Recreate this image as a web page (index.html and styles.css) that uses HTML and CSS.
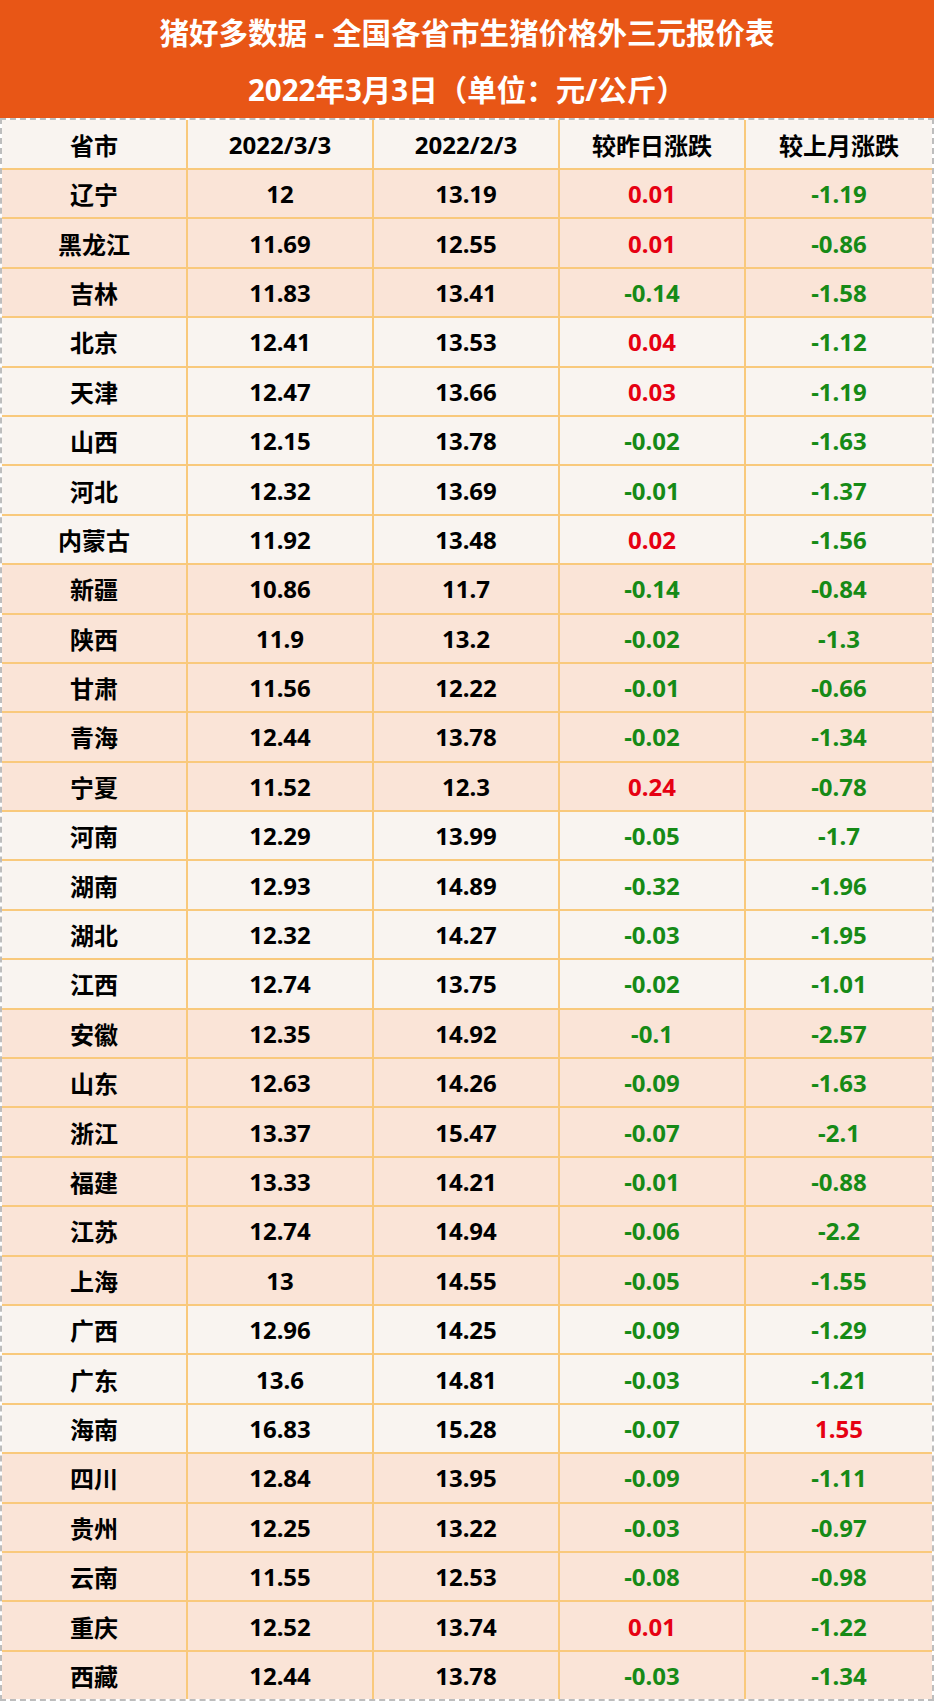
FILE: index.html
```html
<!DOCTYPE html>
<html lang="zh">
<head>
<meta charset="utf-8">
<title>猪好多数据 - 全国各省市生猪价格外三元报价表</title>
<link rel="stylesheet" href="styles.css">
</head>
<body>
<div class="page">
  <header class="banner">
    <div class="title">猪好多数据 - 全国各省市生猪价格外三元报价表</div>
    <div class="title">2022年3月3日（单位：元/公斤）</div>
  </header>
  <div class="sheet">
    <div class="row head"><div class="c">省市</div><div class="c">2022/3/3</div><div class="c">2022/2/3</div><div class="c">较昨日涨跌</div><div class="c">较上月涨跌</div></div>
    <div class="row pink"><div class="c">辽宁</div><div class="c">12</div><div class="c">13.19</div><div class="c up">0.01</div><div class="c dn">-1.19</div></div>
    <div class="row pink"><div class="c">黑龙江</div><div class="c">11.69</div><div class="c">12.55</div><div class="c up">0.01</div><div class="c dn">-0.86</div></div>
    <div class="row pink"><div class="c">吉林</div><div class="c">11.83</div><div class="c">13.41</div><div class="c dn">-0.14</div><div class="c dn">-1.58</div></div>
    <div class="row light"><div class="c">北京</div><div class="c">12.41</div><div class="c">13.53</div><div class="c up">0.04</div><div class="c dn">-1.12</div></div>
    <div class="row light"><div class="c">天津</div><div class="c">12.47</div><div class="c">13.66</div><div class="c up">0.03</div><div class="c dn">-1.19</div></div>
    <div class="row light"><div class="c">山西</div><div class="c">12.15</div><div class="c">13.78</div><div class="c dn">-0.02</div><div class="c dn">-1.63</div></div>
    <div class="row light"><div class="c">河北</div><div class="c">12.32</div><div class="c">13.69</div><div class="c dn">-0.01</div><div class="c dn">-1.37</div></div>
    <div class="row light"><div class="c">内蒙古</div><div class="c">11.92</div><div class="c">13.48</div><div class="c up">0.02</div><div class="c dn">-1.56</div></div>
    <div class="row pink"><div class="c">新疆</div><div class="c">10.86</div><div class="c">11.7</div><div class="c dn">-0.14</div><div class="c dn">-0.84</div></div>
    <div class="row pink"><div class="c">陕西</div><div class="c">11.9</div><div class="c">13.2</div><div class="c dn">-0.02</div><div class="c dn">-1.3</div></div>
    <div class="row pink"><div class="c">甘肃</div><div class="c">11.56</div><div class="c">12.22</div><div class="c dn">-0.01</div><div class="c dn">-0.66</div></div>
    <div class="row pink"><div class="c">青海</div><div class="c">12.44</div><div class="c">13.78</div><div class="c dn">-0.02</div><div class="c dn">-1.34</div></div>
    <div class="row pink"><div class="c">宁夏</div><div class="c">11.52</div><div class="c">12.3</div><div class="c up">0.24</div><div class="c dn">-0.78</div></div>
    <div class="row light"><div class="c">河南</div><div class="c">12.29</div><div class="c">13.99</div><div class="c dn">-0.05</div><div class="c dn">-1.7</div></div>
    <div class="row light"><div class="c">湖南</div><div class="c">12.93</div><div class="c">14.89</div><div class="c dn">-0.32</div><div class="c dn">-1.96</div></div>
    <div class="row light"><div class="c">湖北</div><div class="c">12.32</div><div class="c">14.27</div><div class="c dn">-0.03</div><div class="c dn">-1.95</div></div>
    <div class="row light"><div class="c">江西</div><div class="c">12.74</div><div class="c">13.75</div><div class="c dn">-0.02</div><div class="c dn">-1.01</div></div>
    <div class="row pink"><div class="c">安徽</div><div class="c">12.35</div><div class="c">14.92</div><div class="c dn">-0.1</div><div class="c dn">-2.57</div></div>
    <div class="row pink"><div class="c">山东</div><div class="c">12.63</div><div class="c">14.26</div><div class="c dn">-0.09</div><div class="c dn">-1.63</div></div>
    <div class="row pink"><div class="c">浙江</div><div class="c">13.37</div><div class="c">15.47</div><div class="c dn">-0.07</div><div class="c dn">-2.1</div></div>
    <div class="row pink"><div class="c">福建</div><div class="c">13.33</div><div class="c">14.21</div><div class="c dn">-0.01</div><div class="c dn">-0.88</div></div>
    <div class="row pink"><div class="c">江苏</div><div class="c">12.74</div><div class="c">14.94</div><div class="c dn">-0.06</div><div class="c dn">-2.2</div></div>
    <div class="row pink"><div class="c">上海</div><div class="c">13</div><div class="c">14.55</div><div class="c dn">-0.05</div><div class="c dn">-1.55</div></div>
    <div class="row light"><div class="c">广西</div><div class="c">12.96</div><div class="c">14.25</div><div class="c dn">-0.09</div><div class="c dn">-1.29</div></div>
    <div class="row light"><div class="c">广东</div><div class="c">13.6</div><div class="c">14.81</div><div class="c dn">-0.03</div><div class="c dn">-1.21</div></div>
    <div class="row light"><div class="c">海南</div><div class="c">16.83</div><div class="c">15.28</div><div class="c dn">-0.07</div><div class="c up">1.55</div></div>
    <div class="row pink"><div class="c">四川</div><div class="c">12.84</div><div class="c">13.95</div><div class="c dn">-0.09</div><div class="c dn">-1.11</div></div>
    <div class="row pink"><div class="c">贵州</div><div class="c">12.25</div><div class="c">13.22</div><div class="c dn">-0.03</div><div class="c dn">-0.97</div></div>
    <div class="row pink"><div class="c">云南</div><div class="c">11.55</div><div class="c">12.53</div><div class="c dn">-0.08</div><div class="c dn">-0.98</div></div>
    <div class="row pink"><div class="c">重庆</div><div class="c">12.52</div><div class="c">13.74</div><div class="c up">0.01</div><div class="c dn">-1.22</div></div>
    <div class="row pink"><div class="c">西藏</div><div class="c">12.44</div><div class="c">13.78</div><div class="c dn">-0.03</div><div class="c dn">-1.34</div></div>
  </div>
</div>
</body>
</html>
```
FILE: styles.css
```css
* { box-sizing: border-box; }
html, body {
  margin: 0;
  padding: 0;
  background: #ffffff;
}
body {
  font-family: "Noto Sans", "Noto Sans CJK SC", sans-serif;
  font-weight: 700;
  color: #000;
}
.page {
  width: 934px;
  height: 1701px;
  display: flex;
  flex-direction: column;
}
.banner {
  height: 118px;
  background: #e85616;
  padding-top: 4px;
  text-align: center;
  color: #fff;
}
.title {
  font-size: 29.5px;
  line-height: 57px;
  font-weight: 700;
}
.sheet {
  flex: 1;
  display: flex;
  flex-direction: column;
  border: 2px dashed #bdbdbd;
}
.row {
  flex: 1;
  display: grid;
  grid-template-columns: repeat(5, 1fr);
  border-bottom: 2px solid #f9c97c;
}
.row:last-child { border-bottom: none; }
.row.head { flex: 0 0 50px; background: #f9f4f0; }
.row.light { background: #f9f4f0; }
.row.pink { background: #fae4d7; }
.c {
  display: flex;
  align-items: center;
  justify-content: center;
  font-size: 24px;
  border-right: 2px solid #f9c97c;
}
.c:last-child { border-right: none; }
.up { color: #e60012; }
.dn { color: #168a16; }
```
